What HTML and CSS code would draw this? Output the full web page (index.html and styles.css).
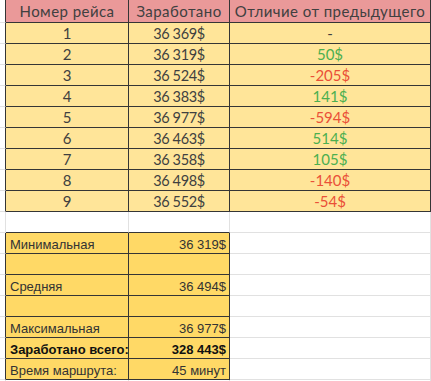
FILE: index.html
```html
<!DOCTYPE html>
<html lang="ru">
<head>
<meta charset="utf-8">
<link rel="stylesheet" href="styles.css">
</head>
<body>
<div class="sheet">
  <div class="g edge hdr-row"></div>
  <div class="c hd">Номер рейса</div>
  <div class="c hd">Заработано</div>
  <div class="c hd last">Отличие от предыдущего</div>

  <div class="g edge"></div><div class="c t">1</div><div class="c t n">36 369$</div><div class="c t last">-</div>
  <div class="g edge"></div><div class="c t">2</div><div class="c t n">36 319$</div><div class="c t last up">50$</div>
  <div class="g edge"></div><div class="c t">3</div><div class="c t n">36 524$</div><div class="c t last down">-205$</div>
  <div class="g edge"></div><div class="c t">4</div><div class="c t n">36 383$</div><div class="c t last up">141$</div>
  <div class="g edge"></div><div class="c t">5</div><div class="c t n">36 977$</div><div class="c t last down">-594$</div>
  <div class="g edge"></div><div class="c t">6</div><div class="c t n">36 463$</div><div class="c t last up">514$</div>
  <div class="g edge"></div><div class="c t">7</div><div class="c t n">36 358$</div><div class="c t last up">105$</div>
  <div class="g edge"></div><div class="c t">8</div><div class="c t n">36 498$</div><div class="c t last down">-140$</div>
  <div class="g edge"></div><div class="c t">9</div><div class="c t n">36 552$</div><div class="c t last down">-54$</div>

  <div class="g"></div><div class="g dark-b"></div><div class="g dark-b"></div><div class="g"></div>

  <div class="g edge"></div><div class="c s">Минимальная</div><div class="c s num">36 319$</div><div class="g"></div>
  <div class="g edge"></div><div class="c s"></div><div class="c s num"></div><div class="g"></div>
  <div class="g edge"></div><div class="c s">Средняя</div><div class="c s num">36 494$</div><div class="g"></div>
  <div class="g edge"></div><div class="c s"></div><div class="c s num"></div><div class="g"></div>
  <div class="g edge"></div><div class="c s">Максимальная</div><div class="c s num">36 977$</div><div class="g"></div>
  <div class="g edge"></div><div class="c s b">Заработано всего:</div><div class="c s num b">328 443$</div><div class="g"></div>
  <div class="g edge"></div><div class="c s">Время маршрута:</div><div class="c s num">45 минут</div><div class="g"></div>
  <div class="g"></div><div class="g"></div><div class="g"></div><div class="g"></div>
</div>
</body>
</html>
```
FILE: styles.css
```css
html, body {
  margin: 0;
  padding: 0;
  background: #ffffff;
}
.sheet {
  display: grid;
  grid-template-columns: 6px 123px 101px 201px;
  grid-template-rows: 23px repeat(18, 21px);
  width: 431px;
  height: 381px;
  overflow: hidden;
}
.sheet > div {
  box-sizing: border-box;
  border-right: 1px solid #e1e1e1;
  border-bottom: 1px solid #e1e1e1;
  white-space: pre;
  overflow: visible;
  min-width: 0;
}
.g.edge {
  border-right-color: #353535;
}
.g.dark-b {
  border-bottom-color: #353535;
}
.c {
  display: flex;
  align-items: center;
  border-right-color: #353535 !important;
  border-bottom-color: #353535 !important;
  color: #404040;
  position: relative;
  z-index: 1;
}
.hd, .t {
  justify-content: center;
  font-family: "Lato", "DejaVu Sans", sans-serif;
  font-size: 15px;
  font-weight: 400;
}
.hd {
  background: #ea9999;
  padding-bottom: 1px;
  letter-spacing: 0.45px;
}
.t {
  background: #ffe599;
}
.t.n {
  font-size: 14.5px;
  letter-spacing: -0.35px;
}
.up { color: #4caf50; }
.down { color: #ea5038; }
.s {
  background: #ffd966;
  font-family: "Liberation Sans", Arial, sans-serif;
  font-size: 13px;
  color: #333333;
  padding: 2px 3px 0 4px;
}
.s.num {
  justify-content: flex-end;
  padding-right: 3px;
}
.s.b {
  font-weight: bold;
  color: #111;
}
```
